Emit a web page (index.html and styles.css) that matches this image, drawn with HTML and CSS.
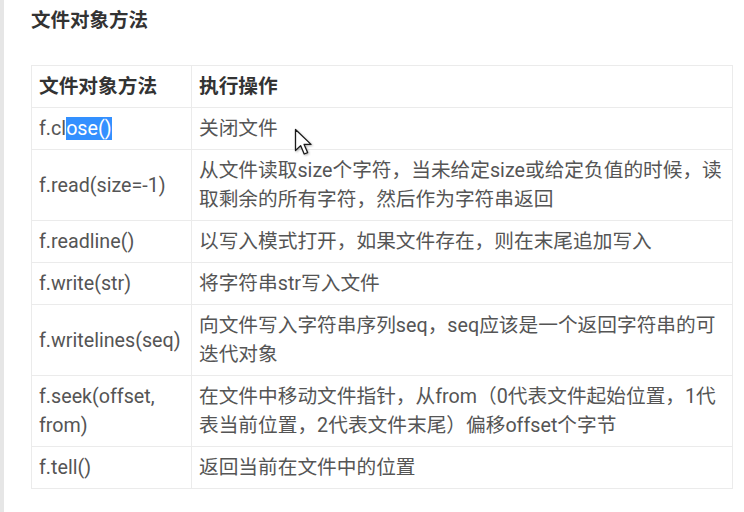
FILE: index.html
```html
<!DOCTYPE html>
<html lang="zh-CN">
<head>
<meta charset="utf-8">
<title>文件对象方法</title>
<link rel="stylesheet" href="styles.css">
</head>
<body>
<div class="page">
  <h3 class="title">文件对象方法</h3>
  <table class="methods">
    <colgroup><col class="c1"><col class="c2"></colgroup>
    <thead>
      <tr><th>文件对象方法</th><th>执行操作</th></tr>
    </thead>
    <tbody>
      <tr><td>f.cl<span class="sel">ose()</span></td><td class="cursor-cell">关闭文件<svg class="cursor" width="19" height="28" viewBox="0 0 19 28"><path d="M1.5 1.5 L1.5 22.5 L6.6 17.6 L10.2 26 L13.6 24.6 L10.1 16.4 L17 16.4 Z" fill="#fff" stroke="#1a1a1a" stroke-width="1.3" stroke-linejoin="round"/></svg></td></tr>
      <tr><td>f.read(size=-1)</td><td>从文件读取size个字符，当未给定size或给定负值的时候，读取剩余的所有字符，然后作为字符串返回</td></tr>
      <tr><td>f.readline()</td><td>以写入模式打开，如果文件存在，则在末尾追加写入</td></tr>
      <tr><td>f.write(str)</td><td>将字符串str写入文件</td></tr>
      <tr><td>f.writelines(seq)</td><td>向文件写入字符串序列seq，seq应该是一个返回字符串的可迭代对象</td></tr>
      <tr><td>f.seek(offset, from)</td><td>在文件中移动文件指针，从from（0代表文件起始位置，1代表当前位置，2代表文件末尾）偏移offset个字节</td></tr>
      <tr><td>f.tell()</td><td>返回当前在文件中的位置</td></tr>
    </tbody>
  </table>
</div>
</body>
</html>
```
FILE: styles.css
```css
html, body {
  margin: 0;
  padding: 0;
  background: #ffffff;
}

.page {
  border-left: 4px solid #e6e6e6;
  min-height: 512px;
  box-sizing: border-box;
  padding: 8px 0 0 27px;
  font-family: Roboto, "Noto Sans CJK SC", sans-serif;
  color: #555555;
}

.title {
  margin: 0;
  font-size: 19.5px;
  line-height: 26px;
  font-weight: bold;
  color: #333333;
}

.methods {
  margin-top: 31px;
  width: 702px;
  border-collapse: collapse;
  table-layout: fixed;
  font-size: 19.7px;
  line-height: 29px;
  border: 1px solid #e6e6e6;
}

.c1 { width: 160px; }

.methods th,
.methods td {
  border: 1px solid #ebebeb;
  padding: 6px 7px;
  text-align: left;
  vertical-align: middle;
}

.methods th {
  font-weight: bold;
  color: #333333;
}

.sel {
  background: #3390ff;
  color: #ffffff;
}

.cursor-cell {
  position: relative;
}

.cursor {
  position: absolute;
  left: 102px;
  top: 20px;
  filter: drop-shadow(1px 1px 1px rgba(0, 0, 0, 0.3));
}
```
